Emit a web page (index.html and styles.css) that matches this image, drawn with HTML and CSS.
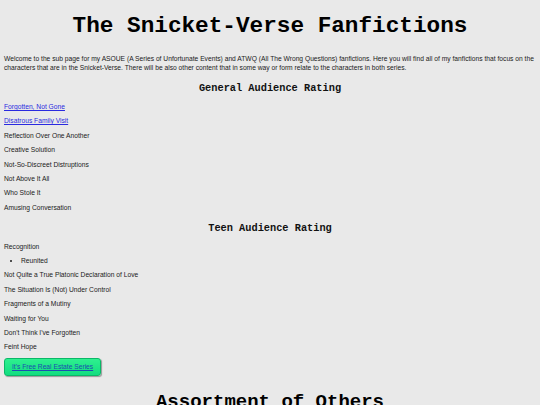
FILE: index.html
```html
<!DOCTYPE html>
<html>
<head>
<meta charset="utf-8">
<link rel="stylesheet" href="styles.css">
</head>
<body>
<h1 class="title">The Snicket-Verse Fanfictions</h1>
<p class="intro">Welcome to the sub page for my ASOUE (A Series of Unfortunate Events) and ATWQ (All The Wrong Questions) fanfictions. Here you will find all of my fanfictions that focus on the characters that are in the Snicket-Verse. There will be also other content that in some way or form relate to the characters in both series.</p>
<h2 class="section">General Audience Rating</h2>
<p class="item"><a href="#">Forgotten, Not Gone</a></p>
<p class="item"><a href="#">Disatrous Family Visit</a></p>
<p class="item">Reflection Over One Another</p>
<p class="item">Creative Solution</p>
<p class="item">Not-So-Discreet Distruptions</p>
<p class="item">Not Above It All</p>
<p class="item">Who Stole It</p>
<p class="item">Amusing Conversation</p>
<h2 class="section">Teen Audience Rating</h2>
<p class="item">Recognition</p>
<ul class="sub">
<li>Reunited</li>
</ul>
<p class="item">Not Quite a True Platonic Declaration of Love</p>
<p class="item">The Situation Is (Not) Under Control</p>
<p class="item">Fragments of a Mutiny</p>
<p class="item">Waiting for You</p>
<p class="item">Don't Think I've Forgotten</p>
<p class="item">Feint Hope</p>
<div class="btn"><a href="#">It's Free Real Estate Series</a></div>
<h1 class="big">Assortment of Others</h1>
</body>
</html>
```
FILE: styles.css
```css
html { background: #e9e9e9; }
body {
  margin: 0;
  padding: 0 4px;
  font-family: "Liberation Sans", Arial, sans-serif;
  font-size: 6.7px;
  color: #1a1a1a;
}
.title {
  font-family: "Liberation Mono", "Courier New", monospace;
  font-weight: bold;
  font-size: 22.7px;
  text-align: center;
  margin: 14px 0 0;
  line-height: 24px;
  color: #000;
}
.intro {
  margin: 17px 0 9.5px;
  line-height: 8.8px;
}
.section {
  font-family: "Liberation Mono", "Courier New", monospace;
  font-weight: bold;
  font-size: 10.3px;
  text-align: center;
  margin: 6.6px 0 5.8px;
  line-height: 12px;
  color: #111;
}
.item {
  margin: 0;
  line-height: 14.4px;
}
a { color: #2a2ae0; }
.sub {
  margin: 0;
  padding-left: 17px;
  line-height: 14.4px;
  list-style: disc;
}
.btn {
  display: inline-block;
  margin: 3px 0 0;
  padding: 3px 7px 4px 7px;
  background: linear-gradient(#2ef08f, #12dd80);
  border: 1px solid #0bb868;
  border-radius: 3px;
  box-shadow: 1px 1px 1px rgba(0,0,0,0.35);
  line-height: 9px;
}
.btn a { color: #1c4fb0; }
.big {
  font-family: "Liberation Mono", "Courier New", monospace;
  font-weight: bold;
  font-size: 19px;
  text-align: center;
  margin: 14px 0 0;
  line-height: 24px;
  color: #000;
}
```
